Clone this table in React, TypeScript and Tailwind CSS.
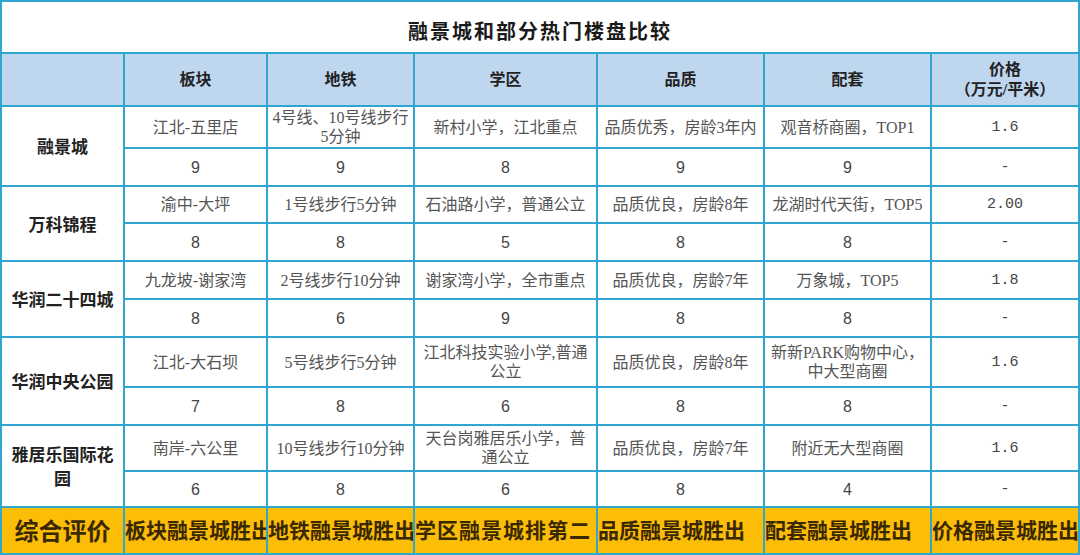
import { Fragment } from "react";

type Estate = {
  name: string;
  info: string[][];
  scores: string[];
  h: [string, string];
};

const HEADERS = ["板块", "地铁", "学区", "品质", "配套"];

const ESTATES: Estate[] = [
  {
    name: "融景城",
    info: [["江北-五里店"], ["4号线、10号线步行", "5分钟"], ["新村小学，江北重点"], ["品质优秀，房龄3年内"], ["观音桥商圈，TOP1"], ["1.6"]],
    scores: ["9", "9", "8", "9", "9", "-"],
    h: ["h-[40px]", "h-[36px]"],
  },
  {
    name: "万科锦程",
    info: [["渝中-大坪"], ["1号线步行5分钟"], ["石油路小学，普通公立"], ["品质优良，房龄8年"], ["龙湖时代天街，TOP5"], ["2.00"]],
    scores: ["8", "8", "5", "8", "8", "-"],
    h: ["h-[35px]", "h-[36px]"],
  },
  {
    name: "华润二十四城",
    info: [["九龙坡-谢家湾"], ["2号线步行10分钟"], ["谢家湾小学，全市重点"], ["品质优良，房龄7年"], ["万象城，TOP5"], ["1.8"]],
    scores: ["8", "6", "9", "8", "8", "-"],
    h: ["h-[36px]", "h-[36px]"],
  },
  {
    name: "华润中央公园",
    info: [["江北-大石坝"], ["5号线步行5分钟"], ["江北科技实验小学,普通", "公立"], ["品质优良，房龄8年"], ["新新PARK购物中心，", "中大型商圈"], ["1.6"]],
    scores: ["7", "8", "6", "8", "8", "-"],
    h: ["h-[48px]", "h-[36px]"],
  },
  {
    name: "雅居乐国际花园",
    info: [["南岸-六公里"], ["10号线步行10分钟"], ["天台岗雅居乐小学，普", "通公立"], ["品质优良，房龄7年"], ["附近无大型商圈"], ["1.6"]],
    scores: ["6", "8", "6", "8", "4", "-"],
    h: ["h-[44px]", "h-[34px]"],
  },
];

const SUMMARY = ["板块融景城胜出", "地铁融景城胜出", "学区融景城排第二", "品质融景城胜出", "配套融景城胜出", "价格融景城胜出"];

const serif = "font-['Liberation_Serif','Noto_Sans_CJK_SC',serif]";

function Cell({ lines, className = "" }: { lines: string[]; className?: string }) {
  return (
    <div className={`flex flex-col items-center justify-center bg-white text-center leading-[19px] ${className}`}>
      {lines.map((l, i) => (
        <span key={i} className="whitespace-nowrap">{l}</span>
      ))}
    </div>
  );
}

export default function App() {
  return (
    <div className={`h-[555px] w-[1080px] overflow-hidden bg-white ${serif}`}>
      <div className="grid grid-cols-[121px_141px_145px_181px_165px_165px_146px] gap-[2px] bg-[#2ea6cf] p-[2px]">
        {/* title */}
        <div className="col-span-7 flex h-[50px] items-center justify-center bg-white pt-[10px] text-[20px] font-bold tracking-[2px] text-[#1a1a1a]">
          融景城和部分热门楼盘比较
        </div>

        {/* header */}
        <div className="h-[51px] bg-[#bed7ee]" />
        {HEADERS.map((h) => (
          <div key={h} className="flex h-[51px] items-center justify-center bg-[#bed7ee] text-[16px] font-bold text-[#222]">
            {h}
          </div>
        ))}
        <div className="flex h-[51px] flex-col items-center justify-center bg-[#bed7ee] text-[16px] font-bold leading-[20px] text-[#222]">
          <span>价格</span>
          <span>（万元/平米）</span>
        </div>

        {/* rows */}
        {ESTATES.map((e) => (
          <Fragment key={e.name}>
            <div className="row-span-2 flex items-center justify-center bg-white px-[4px] pt-[4px] text-center text-[17px] font-bold leading-[24px] text-[#222]">
              {e.name}
            </div>
            {e.info.map((lines, i) => (
              <Cell
                key={`i${i}`}
                lines={lines}
                className={`${e.h[0]} ${i === 5 ? "font-['Liberation_Mono',monospace] text-[15px] text-[#444]" : "text-[16px] text-[#555]"}`}
              />
            ))}
            {e.scores.map((s, i) => (
              <Cell
                key={`s${i}`}
                lines={[s]}
                className={`${e.h[1]} ${i === 5 ? "font-['Liberation_Mono',monospace] text-[15px]" : "font-['Liberation_Sans',sans-serif] text-[16px]"} text-[#444]`}
              />
            ))}
          </Fragment>
        ))}

        {/* summary */}
        <div className="flex h-[45px] items-center justify-center bg-[#fcbd07] pt-[2px] text-[24px] font-bold text-[#3a2800]">
          综合评价
        </div>
        {SUMMARY.map((s, i) => (
          <div
            key={s}
            className={`flex h-[45px] items-center overflow-hidden whitespace-nowrap bg-[#fcbd07] pt-[2px] text-[21px] font-bold text-[#3a2800] ${i === 2 ? "tracking-[1px]" : ""}`}
          >
            {s}
          </div>
        ))}
      </div>
    </div>
  );
}
